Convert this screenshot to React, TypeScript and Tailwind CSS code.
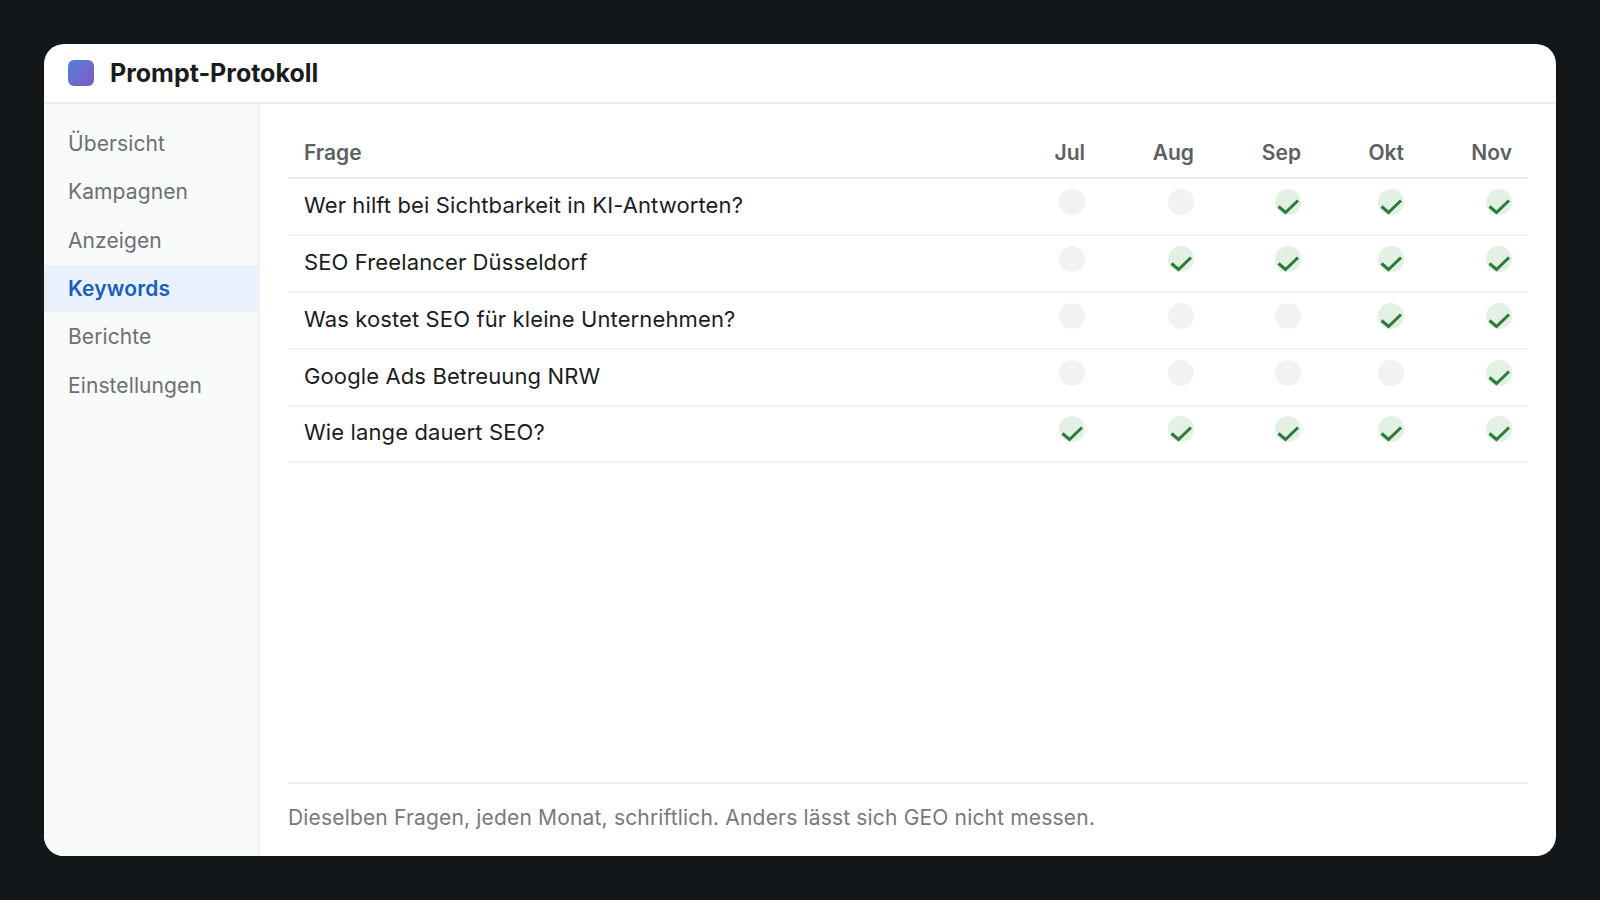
const navItems = ["Übersicht", "Kampagnen", "Anzeigen", "Keywords", "Berichte", "Einstellungen"];

const months = [
  { label: "Jul", width: "w-[125px]" },
  { label: "Aug", width: "w-[109px]" },
  { label: "Sep", width: "w-[107px]" },
  { label: "Okt", width: "w-[103px]" },
  { label: "Nov", width: "w-[108px]" },
];

const rows: { question: string; checks: boolean[] }[] = [
  { question: "Wer hilft bei Sichtbarkeit in KI-Antworten?", checks: [false, false, true, true, true] },
  { question: "SEO Freelancer Düsseldorf", checks: [false, true, true, true, true] },
  { question: "Was kostet SEO für kleine Unternehmen?", checks: [false, false, false, true, true] },
  { question: "Google Ads Betreuung NRW", checks: [false, false, false, false, true] },
  { question: "Wie lange dauert SEO?", checks: [true, true, true, true, true] },
];

function Mark({ checked }: { checked: boolean }) {
  if (!checked) {
    return <span className="inline-block h-[26px] w-[26px] rounded-full bg-[#f1f2f3]" />;
  }
  return (
    <span className="inline-flex h-[26px] w-[26px] items-center justify-center rounded-full bg-[#e3f1e4]">
      <svg width="26" height="26" viewBox="0 0 26 26" fill="none" className="overflow-visible">
        <path d="M3.5 17.5 L10.5 23.5 L23 11.5" stroke="#2b7a37" strokeWidth="3" />
      </svg>
    </span>
  );
}

export default function App() {
  return (
    <div className="flex h-[900px] w-[1600px] items-center justify-center bg-[#13171a] font-['Inter',sans-serif]">
      <div className="flex h-[812px] w-[1512px] flex-col overflow-hidden rounded-[20px] bg-white">
        <header className="flex h-[60px] items-center gap-4 border-b-2 border-[#eceded] px-6">
          <span className="h-[26px] w-[26px] rounded-[6px] bg-gradient-to-br from-[#4a80d8] to-[#7f58c2]" />
          <h1 className="pt-[2px] text-[25px] font-bold text-[#1b1c1e]">Prompt-Protokoll</h1>
        </header>
        <div className="flex min-h-0 flex-1">
          <nav className="w-[216px] shrink-0 border-r-2 border-[#f1f2f2] bg-[#f9fafa] pt-[15.5px]">
            {navItems.map((item) => (
              <div
                key={item}
                className={
                  item === "Keywords"
                    ? "my-[0.7px] flex h-[47px] items-center bg-[#e9f1fd] px-6 text-[21px] font-semibold tracking-[0.15px] text-[#1a5fb8]"
                    : "flex h-[48.4px] items-center px-6 text-[21px] tracking-[0.1px] text-[#6c6f73]"
                }
              >
                {item}
              </div>
            ))}
          </nav>
          <main className="flex min-w-0 flex-1 flex-col px-7">
            <div className="flex-1 pt-[16px]">
              <table className="w-full table-fixed border-collapse">
                <thead>
                  <tr className="h-[58px] border-b-2 border-[#ecedee]">
                    <th className="px-4 pt-[9px] text-left text-[21px] font-semibold text-[#5c5f63]">Frage</th>
                    {months.map((m) => (
                      <th key={m.label} className={`${m.width} px-4 pt-[9px] text-right text-[21px] font-semibold text-[#5c5f63]`}>
                        {m.label}
                      </th>
                    ))}
                  </tr>
                </thead>
                <tbody>
                  {rows.map((row) => (
                    <tr key={row.question} className="h-[57px] border-b-2 border-[#f1f2f2] last:h-[56px]">
                      <td className="px-4 pb-[3px] text-[22px] tracking-[0.12px] text-[#1b1c1e]">{row.question}</td>
                      {row.checks.map((checked, i) => (
                        <td key={i} className="px-4 pb-[8px] text-right align-middle leading-none">
                          <Mark checked={checked} />
                        </td>
                      ))}
                    </tr>
                  ))}
                </tbody>
              </table>
            </div>
            <footer className="flex h-[74px] items-center border-t-2 border-[#eeefef] pb-[4px] text-[21px] tracking-[0.17px] text-[#77797c]">
              Dieselben Fragen, jeden Monat, schriftlich. Anders lässt sich GEO nicht messen.
            </footer>
          </main>
        </div>
      </div>
    </div>
  );
}
